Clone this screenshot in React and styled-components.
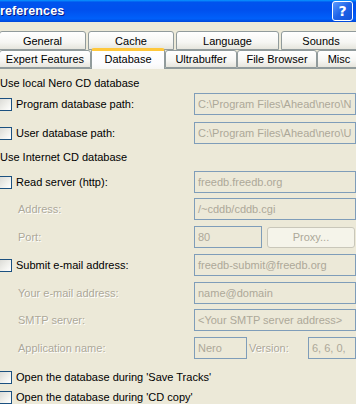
import React from 'react'
import styled, { createGlobalStyle } from 'styled-components'

const Global = createGlobalStyle`
  html, body { margin: 0; padding: 0; background: #ECE9D8; }
  body { width: 356px; height: 404px; overflow: hidden; font-family: "Liberation Sans", Arial, sans-serif; font-size: 11px; }
`

const Window = styled.div`
  width: 356px;
  height: 404px;
  background: #ECE9D8;
  overflow: hidden;
  color: #000;
`

const TitleBar = styled.div`
  height: 22px;
  display: flex;
  align-items: center;
  justify-content: space-between;
  background: linear-gradient(#0997FF 0%, #0053EE 10%, #0050EE 45%, #0060FA 85%, #0046D8 100%);
  padding-right: 3px;
`

const Title = styled.span`
  color: #fff;
  font-weight: bold;
  font-size: 12.5px;
  letter-spacing: 0.1px;
  text-shadow: 1px 1px 0 #0A1883;
  margin-top: -1px;
`

const HelpButton = styled.div`
  width: 19px;
  height: 18px;
  margin-top: -1px;
  border: 1px solid #fff;
  border-radius: 3px;
  background: linear-gradient(135deg, #5C9BFF 0%, #1F63E8 50%, #1453D8 100%);
  color: #fff;
  font-weight: bold;
  font-size: 14px;
  display: flex;
  align-items: center;
  justify-content: center;
  font-family: "DejaVu Sans", sans-serif;
`

const Tabs = styled.div`
  margin-top: 10px;
  display: flex;
  flex-direction: column;
`

const TabRow = styled.div`
  display: flex;
  gap: ${p => p.$gap}px;
  height: ${p => p.$h}px;
  align-items: flex-end;
  position: relative;
  z-index: ${p => p.$z};
`

const Tab = styled.div`
  flex: none;
  width: ${p => p.$w}px;
  height: ${p => (p.$selected ? 21 : p.$h)}px;
  box-sizing: border-box;
  border: 1px solid #919B9C;
  border-bottom: ${p => (p.$selected ? 'none' : '1px solid #919B9C')};
  border-top: ${p => (p.$selected ? '3px solid #FFC83C' : '1px solid #919B9C')};
  border-radius: 3px 3px 0 0;
  margin-left: ${p => p.$ml || 0}px;
  margin-bottom: ${p => (p.$selected ? -1 : 0)}px;
  background: ${p =>
    p.$selected
      ? 'linear-gradient(#FFFFFF, #FCFCFE 70%, #F7F7F4)'
      : 'linear-gradient(#FFFFFF, #F6F6F3 60%, #E6E5DD)'};
  display: flex;
  align-items: center;
  justify-content: center;
  padding-bottom: ${p => (p.$selected ? 3 : 0)}px;
  white-space: nowrap;
  position: relative;
  z-index: ${p => (p.$selected ? 2 : 1)};
`

const Panel = styled.div`
  border-top: 1px solid #919B9C;
  padding-top: 7px;
  display: flex;
  flex-direction: column;
  position: relative;
  z-index: 1;
`

const Row = styled.div`
  display: grid;
  grid-template-columns: 194px 162px;
  align-items: center;
  height: ${p => p.$h || 22}px;
  margin-top: ${p => p.$mt || 0}px;
`

const Heading = styled.div`
  height: 14px;
  line-height: 14px;
  margin-top: ${p => p.$mt || 0}px;
`

const CheckLabel = styled.label`
  display: flex;
  align-items: center;
  gap: 4px;
  margin-left: -1px;
  white-space: nowrap;
`

const Box = styled.span`
  width: 13px;
  height: 13px;
  box-sizing: border-box;
  border: 1px solid #1C5180;
  background: linear-gradient(135deg, #DCDCD7 0%, #F2F2EE 60%, #FFFFFF 100%);
  flex: none;
`

const Dim = styled.span`
  color: #ACA899;
  text-shadow: 1px 1px 0 #FFFFFF;
  padding-left: ${p => p.$pl || 0}px;
  white-space: nowrap;
`

const Field = styled.div`
  box-sizing: border-box;
  width: ${p => p.$w || 162}px;
  height: 22px;
  border: 1px solid #7F9DB9;
  background: #ECE9D8;
  color: #ACA899;
  padding: 0 3px;
  display: flex;
  align-items: center;
  overflow: hidden;
  white-space: nowrap;
  flex: none;
`

const Inline = styled.div`
  display: flex;
  align-items: center;
  gap: ${p => p.$gap || 0}px;
`

const ProxyButton = styled.div`
  box-sizing: border-box;
  width: 88px;
  height: 21px;
  margin-left: 5px;
  border: 1px solid #C9C7BA;
  border-radius: 3px;
  background: #F5F4EA;
  color: #ACA899;
  display: flex;
  align-items: center;
  justify-content: center;
`

const Check = ({ children }) => (
  <CheckLabel>
    <Box />
    {children}
  </CheckLabel>
)

const row1 = [
  { t: 'General', w: 87 },
  { t: 'Cache', w: 86 },
  { t: 'Language', w: 103 },
  { t: 'Sounds', w: 80 }
]

const row2 = [
  { t: 'Expert Features', w: 92 },
  { t: 'Database', w: 74, selected: true },
  { t: 'Ultrabuffer', w: 72 },
  { t: 'File Browser', w: 80 },
  { t: 'Misc', w: 44 }
]

export default function App() {
  return (
    <Window>
      <Global />
      <TitleBar>
        <Title>references</Title>
        <HelpButton>?</HelpButton>
      </TitleBar>

      <Tabs>
        <TabRow $gap={2} $h={18} $z={1}>
          {row1.map(t => (
            <Tab key={t.t} $w={t.w} $h={19} $ml={t.t === 'General' ? -1 : 0}>
              {t.t}
            </Tab>
          ))}
        </TabRow>
        <TabRow $gap={0} $h={18} $z={2}>
          {row2.map(t => (
            <Tab key={t.t} $w={t.w} $h={18} $selected={t.selected} $ml={t.t === 'Expert Features' ? -1 : 0}>
              {t.t}
            </Tab>
          ))}
        </TabRow>
      </Tabs>

      <Panel>
        <Heading>Use local Nero CD database</Heading>
        <Row $mt={3}>
          <Check>Program database path:</Check>
          <Field>C:\Program Files\Ahead\nero\N</Field>
        </Row>
        <Row $mt={7}>
          <Check>User database path:</Check>
          <Field>C:\Program Files\Ahead\nero\U</Field>
        </Row>

        <Heading $mt={6}>Use Internet CD database</Heading>
        <Row $mt={7}>
          <Check>Read server (http):</Check>
          <Field>freedb.freedb.org</Field>
        </Row>
        <Row $mt={5}>
          <Dim $pl={18}>Address:</Dim>
          <Field>/~cddb/cddb.cgi</Field>
        </Row>
        <Row $mt={6}>
          <Dim $pl={18}>Port:</Dim>
          <Inline>
            <Field $w={68}>80</Field>
            <ProxyButton>Proxy...</ProxyButton>
          </Inline>
        </Row>
        <Row $mt={6}>
          <Check>Submit e-mail address:</Check>
          <Field>freedb-submit@freedb.org</Field>
        </Row>
        <Row $mt={6}>
          <Dim $pl={18}>Your e-mail address:</Dim>
          <Field>name@domain</Field>
        </Row>
        <Row $mt={5}>
          <Dim $pl={18}>SMTP server:</Dim>
          <Field>&lt;Your SMTP server address&gt;</Field>
        </Row>
        <Row $mt={6}>
          <Dim $pl={18}>Application name:</Dim>
          <Inline $gap={2}>
            <Field $w={53}>Nero</Field>
            <Dim>Version:</Dim>
            <Field $w={48} style={{ marginLeft: 'auto' }}>6, 6, 0,</Field>
          </Inline>
        </Row>

        <Row $mt={11} $h={14}>
          <Check>Open the database during 'Save Tracks'</Check>
        </Row>
        <Row $mt={6} $h={14}>
          <Check>Open the database during 'CD copy'</Check>
        </Row>
      </Panel>
    </Window>
  )
}
